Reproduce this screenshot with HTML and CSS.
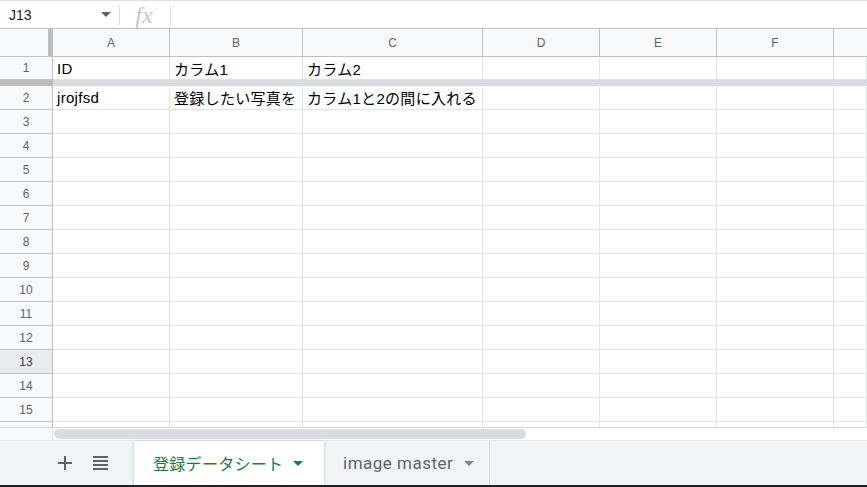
FILE: index.html
```html
<!DOCTYPE html>
<html>
<head>
<meta charset="utf-8">
<link rel="stylesheet" href="styles.css">
</head>
<body>
<div class="app">
  <div class="topbar">
    <div class="namebox"><span class="ref">J13</span><span class="caret"></span></div>
    <div class="sep"></div>
    <div class="fx">fx</div>
    <div class="sep"></div>
    <div class="formula"></div>
  </div>
  <div class="sheet">
    <div class="corner"><span class="vfreeze"></span></div>
    <div class="ch">A</div><div class="ch">B</div><div class="ch">C</div><div class="ch">D</div><div class="ch">E</div><div class="ch">F</div><div class="ch last"></div>

    <div class="rh">1</div><div class="c">ID</div><div class="c">カラム1</div><div class="c">カラム2</div><div class="c"></div><div class="c"></div><div class="c"></div><div class="c"></div>

    <div class="freeze-rh"></div><div class="freeze"></div>

    <div class="rh">2</div><div class="c">jrojfsd</div><div class="c">登録したい写真を</div><div class="c">カラム1と2の間に入れる</div><div class="c"></div><div class="c"></div><div class="c"></div><div class="c"></div>

    <div class="rh">3</div><div class="c"></div><div class="c"></div><div class="c"></div><div class="c"></div><div class="c"></div><div class="c"></div><div class="c"></div>
    <div class="rh">4</div><div class="c"></div><div class="c"></div><div class="c"></div><div class="c"></div><div class="c"></div><div class="c"></div><div class="c"></div>
    <div class="rh">5</div><div class="c"></div><div class="c"></div><div class="c"></div><div class="c"></div><div class="c"></div><div class="c"></div><div class="c"></div>
    <div class="rh">6</div><div class="c"></div><div class="c"></div><div class="c"></div><div class="c"></div><div class="c"></div><div class="c"></div><div class="c"></div>
    <div class="rh">7</div><div class="c"></div><div class="c"></div><div class="c"></div><div class="c"></div><div class="c"></div><div class="c"></div><div class="c"></div>
    <div class="rh">8</div><div class="c"></div><div class="c"></div><div class="c"></div><div class="c"></div><div class="c"></div><div class="c"></div><div class="c"></div>
    <div class="rh">9</div><div class="c"></div><div class="c"></div><div class="c"></div><div class="c"></div><div class="c"></div><div class="c"></div><div class="c"></div>
    <div class="rh">10</div><div class="c"></div><div class="c"></div><div class="c"></div><div class="c"></div><div class="c"></div><div class="c"></div><div class="c"></div>
    <div class="rh">11</div><div class="c"></div><div class="c"></div><div class="c"></div><div class="c"></div><div class="c"></div><div class="c"></div><div class="c"></div>
    <div class="rh">12</div><div class="c"></div><div class="c"></div><div class="c"></div><div class="c"></div><div class="c"></div><div class="c"></div><div class="c"></div>
    <div class="rh sel">13</div><div class="c"></div><div class="c"></div><div class="c"></div><div class="c"></div><div class="c"></div><div class="c"></div><div class="c"></div>
    <div class="rh">14</div><div class="c"></div><div class="c"></div><div class="c"></div><div class="c"></div><div class="c"></div><div class="c"></div><div class="c"></div>
    <div class="rh">15</div><div class="c"></div><div class="c"></div><div class="c"></div><div class="c"></div><div class="c"></div><div class="c"></div><div class="c"></div>
    <div class="rh part"></div><div class="c part"></div><div class="c part"></div><div class="c part"></div><div class="c part"></div><div class="c part"></div><div class="c part"></div><div class="c part"></div>

    <div class="scroll-rh"></div>
    <div class="scroll"><div class="thumb"></div></div>
  </div>
  <div class="tabs">
    <div class="tools">
      <svg class="icon" width="14" height="14" viewBox="0 0 14 14"><path d="M6 0h2v6h6v2H8v6H6V8H0V6h6z" fill="#5f6368"/></svg>
      <svg class="icon" width="15" height="14" viewBox="0 0 15 14"><path d="M0 0h15v2H0zM0 4h15v2H0zM0 8h15v2H0zM0 12h15v2H0z" fill="#5f6368"/></svg>
    </div>
    <div class="tab active"><span class="tlabel">登録データシート</span><span class="tcaret green"></span></div>
    <div class="tab"><span class="tlabel">image master</span><span class="tcaret"></span></div>
  </div>
</div>
</body>
</html>
```

FILE: styles.css
```css
* { box-sizing: border-box; }
html, body { margin: 0; padding: 0; }
body {
  width: 867px;
  height: 487px;
  overflow: hidden;
  background: #fff;
  font-family: "Liberation Sans", Arial, "Noto Sans CJK JP", sans-serif;
}
.app { display: flex; flex-direction: column; height: 487px; }

.topbar {
  height: 28px;
  flex: none;
  display: flex;
  align-items: center;
  border-top: 1px solid #e0e0e0;
  background: #fff;
}
.namebox {
  width: 119px;
  display: flex;
  align-items: center;
  justify-content: space-between;
  padding: 0 8px 0 9px;
}
.ref { font-size: 14px; color: #202124; }
.caret {
  width: 0; height: 0;
  border-left: 5px solid transparent;
  border-right: 5px solid transparent;
  border-top: 5px solid #5f6368;
}
.sep { width: 1px; height: 20px; background: #e0e0e0; }
.fx {
  width: 50px;
  text-align: center;
  font-family: "Liberation Serif", "Times New Roman", serif;
  font-style: italic;
  font-size: 24px;
  color: #c8c8c8;
  line-height: 26px;
  padding-right: 2px;
}
.formula { flex: 1; }

.sheet {
  display: grid;
  grid-template-columns: 53px 117px 133px 180px 117px 117px 117px 1fr;
  grid-template-rows: 29px 23px 6px 24px repeat(13, 24px) 6px 12px;
  flex: none;
}
.corner {
  background: #f8f9fa;
  border-top: 1px solid #c0c0c0;
  border-bottom: 1px solid #c0c0c0;
  border-right: 1px solid #c0c0c0;
  position: relative;
}
.vfreeze {
  position: absolute;
  right: 0; top: 0; bottom: 0;
  width: 4px;
  background: #bdbdbd;
}
.ch {
  background: #f8f9fa;
  border-top: 1px solid #c0c0c0;
  border-bottom: 1px solid #c0c0c0;
  border-right: 1px solid #c0c0c0;
  font-size: 12px;
  color: #5f6368;
  display: flex;
  align-items: center;
  justify-content: center;
}
.ch.last { border-right: none; }
.rh {
  background: #f8f9fa;
  border-right: 1px solid #c0c0c0;
  border-bottom: 1px solid #c0c0c0;
  font-size: 12px;
  color: #5f6368;
  display: flex;
  align-items: center;
  justify-content: center;
}
.rh.sel { background: #e8eaed; color: #3c4043; }
.c {
  border-right: 1px solid #e2e3e3;
  border-bottom: 1px solid #e2e3e3;
  font-size: 15px;
  letter-spacing: 0.3px;
  color: #000;
  padding-left: 4px;
  display: flex;
  align-items: center;
  white-space: nowrap;
  overflow: hidden;
}
.freeze-rh { background: #bdbdbd; }
.freeze { grid-column: 2 / 9; background: #dadce0; }
.rh.part, .c.part { border-bottom: 1px solid #d6d6d6; }
.scroll-rh { background: #f8f9fa; border-right: 1px solid #e0e0e0; }
.scroll {
  grid-column: 2 / 9;
  background: #fff;
  padding: 1px 0 1px 1px;
}
.thumb {
  width: 472px;
  height: 10px;
  border-radius: 5px;
  background: #dadce0;
}

.tabs {
  flex: 1;
  background: #f1f3f4;
  border-top: 1px solid #e8eaed;
  border-bottom: 2px solid #202124;
  display: flex;
  align-items: stretch;
}
.tools {
  width: 134px;
  flex: none;
  display: flex;
  align-items: center;
  padding-left: 58px;
  gap: 21px;
}
.icon { display: block; }
.tab {
  flex: none;
  width: 166px;
  display: flex;
  align-items: center;
  gap: 11px;
  padding: 0 0 0 19px;
  font-family: Roboto, "Liberation Sans", "Noto Sans CJK JP", sans-serif;
  font-size: 17px;
  letter-spacing: 0.5px;
  color: #5f6368;
  border-right: 1px solid #dadce0;
  white-space: nowrap;
}
.tab.active {
  width: 190px;
  background: #fff;
  color: #188038;
  box-shadow: 0 0 3px rgba(60,64,67,0.25);
  border-right: none;
  gap: 10px;
  font-family: "Liberation Sans", "Noto Sans CJK JP", sans-serif;
  font-size: 16px;
  letter-spacing: 0.3px;
}
.tlabel { white-space: nowrap; }
.tcaret {
  flex: none;
  width: 0; height: 0;
  border-left: 5px solid transparent;
  border-right: 5px solid transparent;
  border-top: 5px solid #80868b;
}
.tcaret.green { border-top-color: #188038; }
```
